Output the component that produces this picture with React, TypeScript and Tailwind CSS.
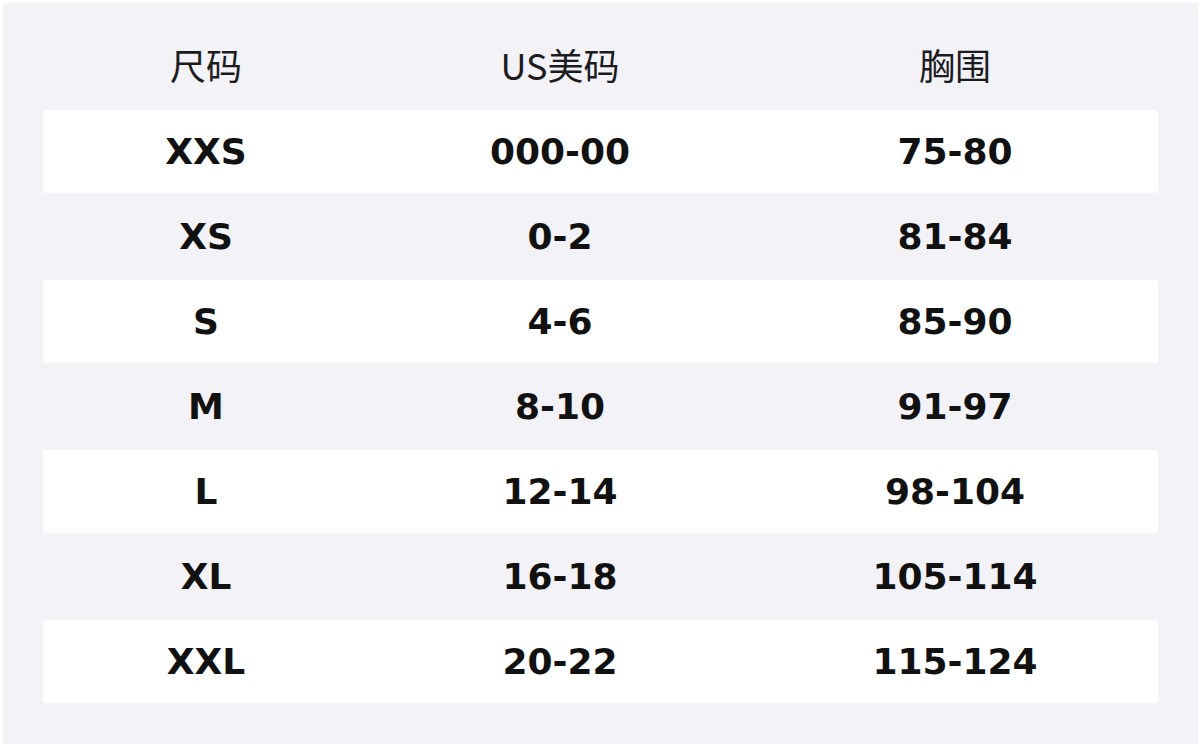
import React from "react";

const rows: [string, string, string][] = [
  ["XXS", "000-00", "75-80"],
  ["XS", "0-2", "81-84"],
  ["S", "4-6", "85-90"],
  ["M", "8-10", "91-97"],
  ["L", "12-14", "98-104"],
  ["XL", "16-18", "105-114"],
  ["XXL", "20-22", "115-124"],
];

export default function App() {
  return (
    <div className="w-[1202px] h-[748px] bg-white pt-[3px] pl-[3px]">
      <div className="w-[1195px] h-[741px] bg-[#f2f2f7] px-[40px]">
        <div
          className="grid grid-cols-[326px_382px_408px] h-[107px] pt-[14px] items-center text-[36px] text-[#1c1c1e]"
          style={{ fontFamily: '"Noto Sans CJK SC", "Noto Sans", sans-serif' }}
        >
          <div className="text-center leading-none">尺码</div>
          <div className="text-center leading-none">US美码</div>
          <div className="text-center leading-none">胸围</div>
        </div>
        <div className="flex flex-col gap-[2px]">
          {rows.map((r, i) => (
            <div
              key={i}
              className={`grid grid-cols-[326px_382px_408px] h-[83px] items-center rounded-[2px] text-[36px] font-bold text-[#111111] ${
                i % 2 === 0 ? "bg-white" : "bg-transparent"
              }`}
              style={{ fontFamily: '"DejaVu Sans", sans-serif' }}
            >
              <div className="text-center leading-none">{r[0]}</div>
              <div className="text-center leading-none">{r[1]}</div>
              <div className="text-center leading-none">{r[2]}</div>
            </div>
          ))}
        </div>
      </div>
    </div>
  );
}
